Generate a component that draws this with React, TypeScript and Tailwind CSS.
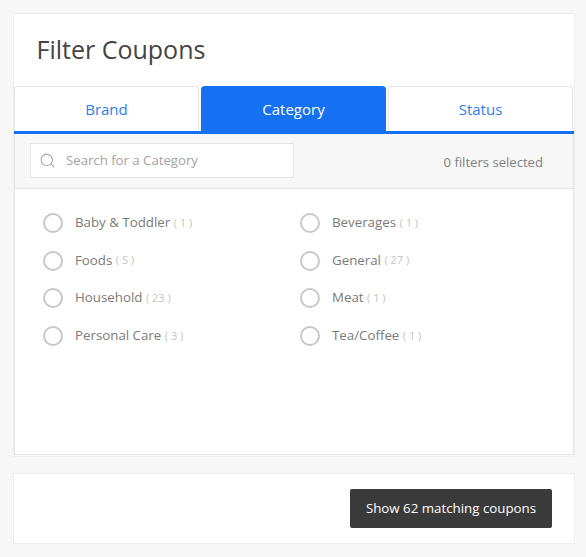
import { Search } from "lucide-react";

const categories = [
  { name: "Baby & Toddler", count: 1 },
  { name: "Beverages", count: 1 },
  { name: "Foods", count: 5 },
  { name: "General", count: 27 },
  { name: "Household", count: 23 },
  { name: "Meat", count: 1 },
  { name: "Personal Care", count: 3 },
  { name: "Tea/Coffee", count: 1 },
];

const tabs = ["Brand", "Category", "Status"];

export default function App() {
  return (
    <div className="h-[557px] w-[586px] overflow-hidden bg-[#f7f7f7] pl-[13px] pt-[13px] font-['Open_Sans',sans-serif]">
      <div className="h-[444px] w-[562px] border border-[#eeeeee] bg-[#f9f9f9] pb-[1px]">
        <h1 className="flex h-[72px] items-center bg-white pb-[2px] pl-[22.5px] text-[25px] leading-none text-[#444444]">Filter Coupons</h1>

        {/* Tabs */}
        <div className="grid h-[48px] grid-cols-[185px_185px_185px] gap-[2px] border-b-[3px] border-[#1570f2] bg-white">
          {tabs.map((tab) =>
            tab === "Category" ? (
              <div key={tab} className="flex items-center justify-center rounded-t-[4px] bg-[#1570f2] pt-[1px] text-[15px] text-white">
                {tab}
              </div>
            ) : (
              <div key={tab} className="flex items-center justify-center rounded-t-[4px] border border-b-0 border-[#e5e5e5] bg-white pt-[1px] text-[15px] text-[#2f7bf0]">
                {tab}
              </div>
            )
          )}
        </div>

        {/* Search row */}
        <div className="flex h-[55px] items-start justify-between border-x border-b border-[#e5e5e5] bg-[#f7f7f7] pl-[15px] pr-[30px] pt-[9px]">
          <div className="flex h-[35px] w-[264px] items-center gap-[10px] border border-[#e5e5e5] bg-white pl-[8px]">
            <Search className="h-[17px] w-[17px] text-[#a8a8a8]" strokeWidth={1.5} />
            <span className="text-[13.2px] text-[#a3a3a3]">Search for a Category</span>
          </div>
          <span className="mt-[10px] text-[13.1px] text-[#7f7f7f]">0 filters selected</span>
        </div>

        {/* Options */}
        <div className="h-[266px] border-x border-b border-[#e5e5e5] bg-white pl-[28px] pt-[24px]">
          <div className="grid grid-cols-[257px_1fr] gap-y-[17.6px]">
            {categories.map((c) => (
              <div key={c.name} className="flex h-[20px] items-center">
                <span className="h-[20px] w-[20px] shrink-0 rounded-full border-2 border-[#c8c8c8] bg-white" />
                <span className="ml-[12px] text-[13.3px] text-[#7a7a7a]">{c.name}</span>
                <span className="ml-[3.5px] text-[11px] text-[#c4c4c4]">( {c.count} )</span>
              </div>
            ))}
          </div>
        </div>
      </div>

      {/* Footer */}
      <div className="mt-[16px] flex h-[71px] w-[562px] items-center justify-end border border-[#eeeeee] bg-white pr-[22px]">
        <button className="h-[39px] w-[202px] rounded-[2px] bg-[#3a3a3a] text-[13.3px] font-medium text-white">
          Show 62 matching coupons
        </button>
      </div>
    </div>
  );
}
